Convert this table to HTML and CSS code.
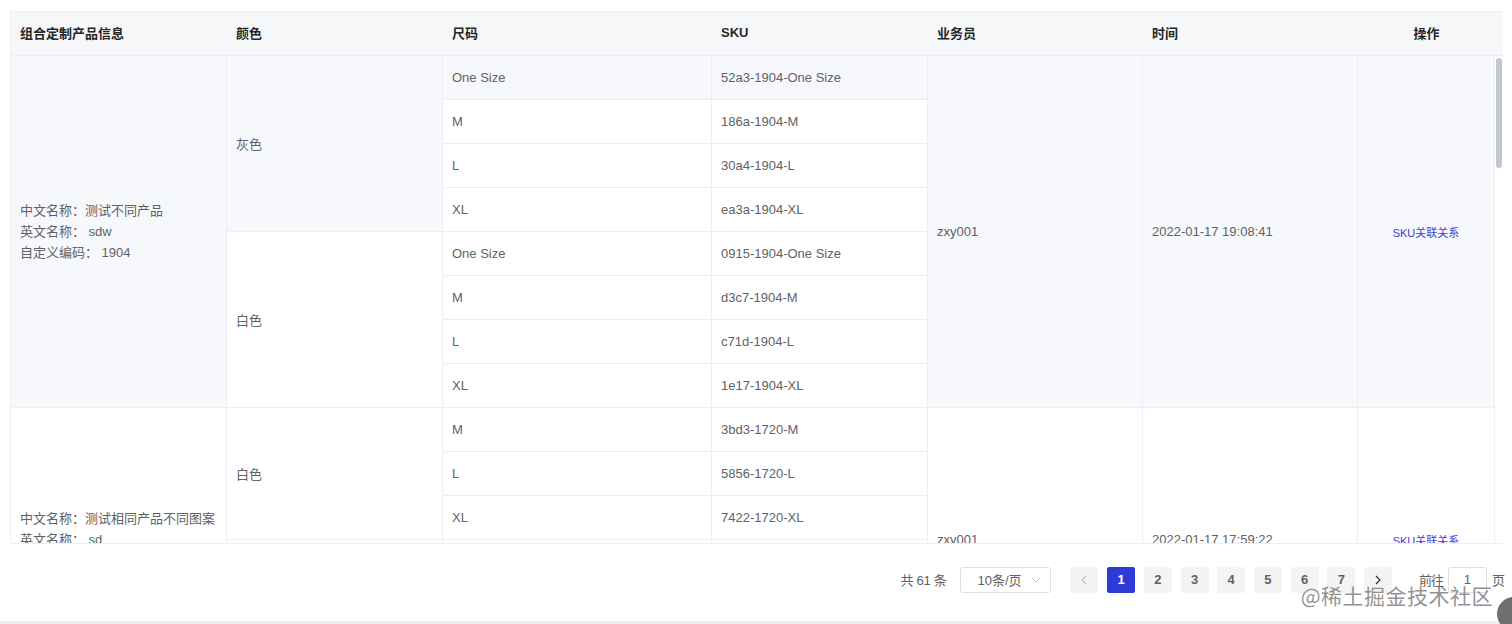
FILE: index.html
```html
<!DOCTYPE html>
<html lang="zh-CN">
<head>
<meta charset="utf-8">
<title>组合定制产品</title>
<link rel="stylesheet" href="styles.css">
</head>
<body>
<div class="page">
  <div class="grid">
    <div class="thead">
      <table class="tbl head-tbl">
        <colgroup>
          <col class="c1"><col class="c2"><col class="c3"><col class="c4"><col class="c5"><col class="c6"><col class="c7"><col class="cg">
        </colgroup>
        <tr>
          <th>组合定制产品信息</th>
          <th>颜色</th>
          <th>尺码</th>
          <th>SKU</th>
          <th>业务员</th>
          <th>时间</th>
          <th class="center">操作</th>
          <th class="gutter-th"></th>
        </tr>
      </table>
    </div>
    <div class="tbody">
      <div class="clip">
        <table class="tbl body-tbl">
          <colgroup>
            <col class="c1"><col class="c2"><col class="c3"><col class="c4"><col class="c5"><col class="c6"><col class="c7">
          </colgroup>
          <tr class="hover">
            <td rowspan="8" class="info">
              <div>中文名称：测试不同产品</div>
              <div>英文名称： sdw</div>
              <div>自定义编码： 1904</div>
            </td>
            <td rowspan="4">灰色</td>
            <td>One Size</td>
            <td>52a3-1904-One Size</td>
            <td rowspan="8">zxy001</td>
            <td rowspan="8">2022-01-17 19:08:41</td>
            <td rowspan="8" class="center"><a class="link">SKU关联关系</a></td>
          </tr>
          <tr><td>M</td><td>186a-1904-M</td></tr>
          <tr><td>L</td><td>30a4-1904-L</td></tr>
          <tr><td>XL</td><td>ea3a-1904-XL</td></tr>
          <tr><td rowspan="4">白色</td><td>One Size</td><td>0915-1904-One Size</td></tr>
          <tr><td>M</td><td>d3c7-1904-M</td></tr>
          <tr><td>L</td><td>c71d-1904-L</td></tr>
          <tr><td>XL</td><td>1e17-1904-XL</td></tr>
          <tr>
            <td rowspan="6" class="info">
              <div>中文名称：测试相同产品不同图案</div>
              <div>英文名称： sd</div>
              <div>自定义编码： 1720</div>
            </td>
            <td rowspan="3">白色</td>
            <td>M</td>
            <td>3bd3-1720-M</td>
            <td rowspan="6">zxy001</td>
            <td rowspan="6">2022-01-17 17:59:22</td>
            <td rowspan="6" class="center"><a class="link">SKU关联关系</a></td>
          </tr>
          <tr><td>L</td><td>5856-1720-L</td></tr>
          <tr><td>XL</td><td>7422-1720-XL</td></tr>
          <tr><td rowspan="3">黑色</td><td>M</td><td>a81c-1720-M</td></tr>
          <tr><td>L</td><td>6f02-1720-L</td></tr>
          <tr><td>XL</td><td>b3e9-1720-XL</td></tr>
        </table>
      </div>
      <div class="gutter"><div class="thumb"></div></div>
    </div>
  </div>

  <div class="pager">
    <span class="total">共 61 条</span>
    <div class="select"><span>10条/页</span>
      <svg class="chev-down" width="10" height="6" viewBox="0 0 10 6"><path d="M1 1l4 4 4-4" fill="none" stroke="#c0c4cc" stroke-width="1"/></svg>
    </div>
    <button class="pbtn prev" type="button">
      <svg width="6" height="10" viewBox="0 0 6 10"><path d="M5 1L1 5l4 4" fill="none" stroke="#c0c4cc" stroke-width="1.2"/></svg>
    </button>
    <button class="pbtn active" type="button">1</button>
    <button class="pbtn" type="button">2</button>
    <button class="pbtn" type="button">3</button>
    <button class="pbtn" type="button">4</button>
    <button class="pbtn" type="button">5</button>
    <button class="pbtn" type="button">6</button>
    <button class="pbtn" type="button">7</button>
    <button class="pbtn next" type="button">
      <svg width="6" height="10" viewBox="0 0 6 10"><path d="M1 1l4 4-4 4" fill="none" stroke="#303133" stroke-width="1.2"/></svg>
    </button>
    <span class="jump">前往</span>
    <div class="jinput">1</div>
    <span class="jump-end">页</span>
  </div>
  <div class="band"></div>
  <div class="watermark">@稀土掘金技术社区</div>
  <div class="fab"></div>
</div>
</body>
</html>
```

FILE: styles.css
```css
* { box-sizing: border-box; }
html, body { margin: 0; padding: 0; background: #fff; }
body {
  font-family: "Liberation Sans", Arial, "Noto Sans CJK SC", sans-serif;
  font-size: 13px;
  color: #606266;
  width: 1512px;
  height: 624px;
  overflow: hidden;
}
.page {
  position: relative;
  height: 624px;
  padding-top: 11px;
}
.grid {
  margin-left: 10px;
  width: 1493px;
  border-top: 1px solid #eef0f4;
  border-left: 1px solid #eef0f4;
}
.tbl {
  border-collapse: separate;
  border-spacing: 0;
  table-layout: fixed;
}
.head-tbl { width: 1492px; }
.body-tbl { width: 1484px; }
.c1 { width: 216px; }
.c2 { width: 216px; }
.c3 { width: 269px; }
.c4 { width: 216px; }
.c5 { width: 215px; }
.c6 { width: 215px; }
.c7 { width: 137px; }
.cg { width: 8px; }

.thead { background: #f6f7f9; }
th {
  height: 43px;
  padding: 0 9px 3px;
  text-align: left;
  font-weight: bold;
  color: #262626;
  font-size: 13px;
  border-bottom: 1px solid #ebeef5;
  background: #f6f7f9;
}
th.center, td.center { text-align: center; }
th.gutter-th { padding: 0; background: #f6f7f9; }

.tbody {
  display: flex;
  height: 488px;
  border-bottom: 1px solid #ebeef5;
}
.clip {
  width: 1484px;
  height: 487px;
  overflow: hidden;
}
.gutter {
  width: 8px;
  padding-top: 2px;
  display: flex;
  justify-content: center;
}
.thumb {
  width: 6px;
  height: 110px;
  border-radius: 3px;
  background: #c3c6d3;
}
tr { height: 44px; }
td {
  padding: 0 9px;
  border-right: 1px solid #ebeef5;
  border-bottom: 1px solid #ebeef5;
  vertical-align: middle;
  white-space: nowrap;
  background: #fff;
}
tr.hover > td { background: #f7f8fb; }
td.info { line-height: 21px; padding-left: 9px; }
.link { color: #3d3fd0; font-size: 11px; }

.pager {
  height: 77px;
  display: flex;
  align-items: center;
  justify-content: flex-end;
  padding-right: 9px;
  padding-bottom: 6px;
}
.total { color: #606266; margin-right: 14px; letter-spacing: -0.3px; }
.select {
  width: 91px;
  height: 26px;
  border: 1px solid #dcdfe6;
  border-radius: 3px;
  display: flex;
  align-items: center;
  justify-content: space-between;
  padding: 0 9px 0 16px;
  color: #606266;
  margin-right: 19px;
}
.pbtn {
  width: 28px;
  height: 26px;
  margin-right: 8.7px;
  border: 0;
  border-radius: 2px;
  background: #f4f4f5;
  color: #606266;
  font-family: "Liberation Sans", Arial, sans-serif;
  font-weight: bold;
  font-size: 13px;
  padding: 0;
  display: flex;
  align-items: center;
  justify-content: center;
}
.pbtn.active { background: #2f3bd6; color: #fff; }
.pbtn.next { margin-right: 27px; }
.jump { color: #606266; letter-spacing: -1px; }
.jinput {
  width: 39px;
  height: 26px;
  margin: 0 5px 0 5px;
  border: 1px solid #dcdfe6;
  border-radius: 3px;
  text-align: center;
  line-height: 24px;
  color: #606266;
}
.jump-end { margin-right: -2px; }
.band { height: 4px; background: #efefef; }

.watermark {
  position: absolute;
  right: 19px;
  top: 581px;
  font-size: 21px;
  color: rgba(110, 110, 110, 0.75);
  letter-spacing: 0.5px;
  font-family: "Noto Sans CJK SC", sans-serif;
  line-height: 28px;
}
.fab {
  position: absolute;
  left: 1497px;
  top: 597px;
  width: 34px;
  height: 34px;
  border-radius: 50%;
  background: #6f6f6f;
}
```
